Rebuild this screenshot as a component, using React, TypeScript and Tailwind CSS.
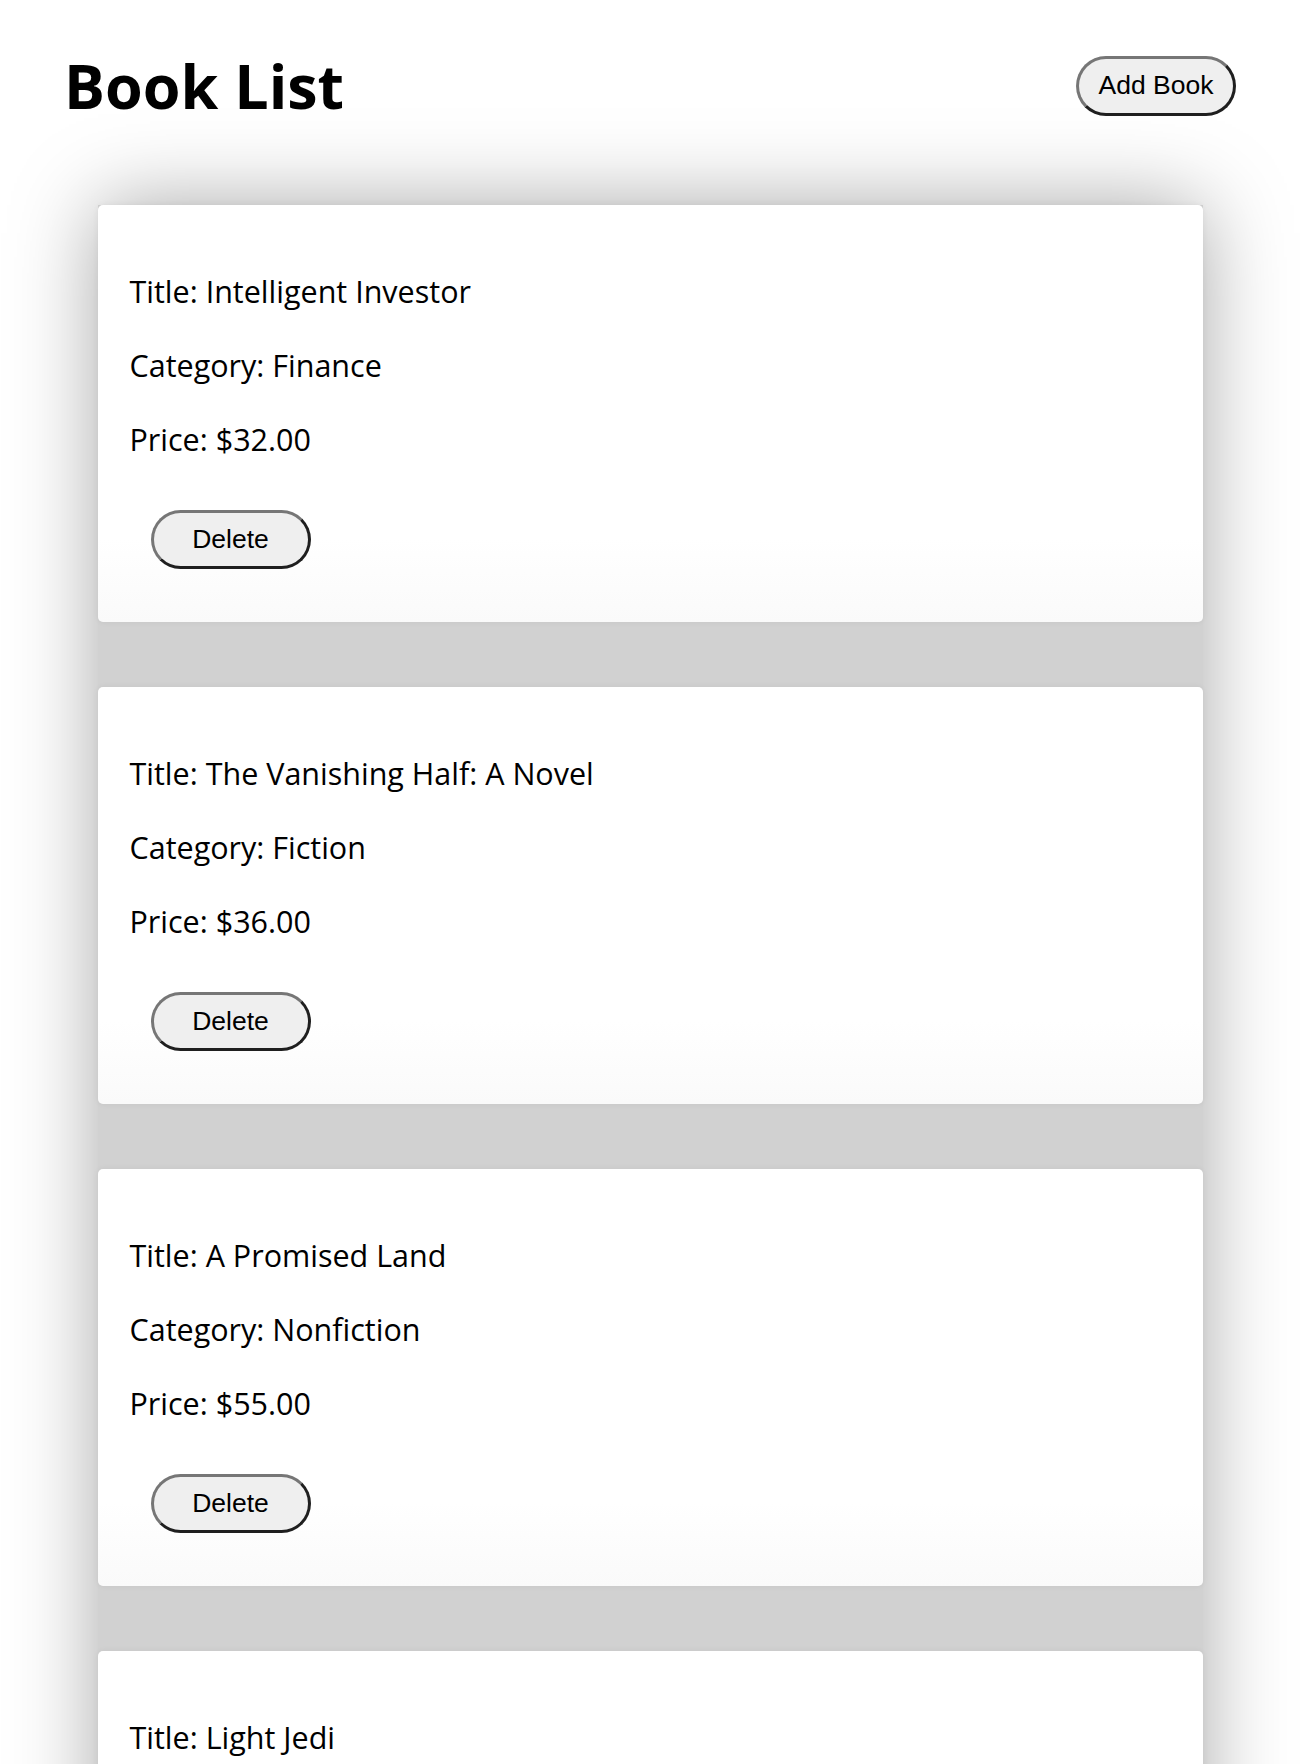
import { FC } from "react";

interface IBook {
  id: number;
  title: string;
  category: string;
  price: number;
}

const books: IBook[] = [
  { id: 1, title: "Intelligent Investor", category: "Finance", price: 32 },
  { id: 2, title: "The Vanishing Half: A Novel", category: "Fiction", price: 36 },
  { id: 3, title: "A Promised Land", category: "Nonfiction", price: 55 },
  { id: 4, title: "Light Jedi", category: "Fiction", price: 28 },
];

const buttonClass =
  "w-[160px] rounded-full border-[3px] border-t-[#767676] border-l-[#767676] border-b-[#1f1f1f] border-r-[#1f1f1f] bg-[#efefef] text-[26.5px] leading-none text-black font-['Liberation_Sans',Arial,sans-serif]";

const BookCard: FC<{ book: IBook }> = ({ book }) => (
  <div className="flex flex-col items-start rounded-[5px] bg-linear-to-b from-white from-80% to-[#fafafa] px-8 pt-[66px] pb-[53px] shadow-[0_0_6px_rgba(0,0,0,0.06)]">
    <p className="text-[30.5px] leading-[40px]">Title: {book.title}</p>
    <p className="mt-[34px] text-[30.5px] leading-[40px]">
      Category: {book.category}
    </p>
    <p className="mt-[34px] text-[30.5px] leading-[40px]">
      Price: ${book.price.toFixed(2)}
    </p>
    <button className={`${buttonClass} mt-[51px] ml-[21px] h-[59px]`}>
      Delete
    </button>
  </div>
);

export default function App() {
  return (
    <div className="min-h-screen bg-white pb-20 text-black font-['Open_Sans',sans-serif]">
      <header className="flex items-center justify-between px-16 pt-[55px]">
        <h1 className="text-[61px] font-bold leading-none">Book List</h1>
        <button className={`${buttonClass} h-[60px]`}>Add Book</button>
      </header>

      <div className="mx-auto mt-[89px] flex w-[85%] flex-col gap-[65px] bg-[#d1d1d1] shadow-[0_0_80px_rgba(0,0,0,0.35)]">
        {books.map((book) => (
          <BookCard book={book} key={book.id} />
        ))}
      </div>
    </div>
  );
}
